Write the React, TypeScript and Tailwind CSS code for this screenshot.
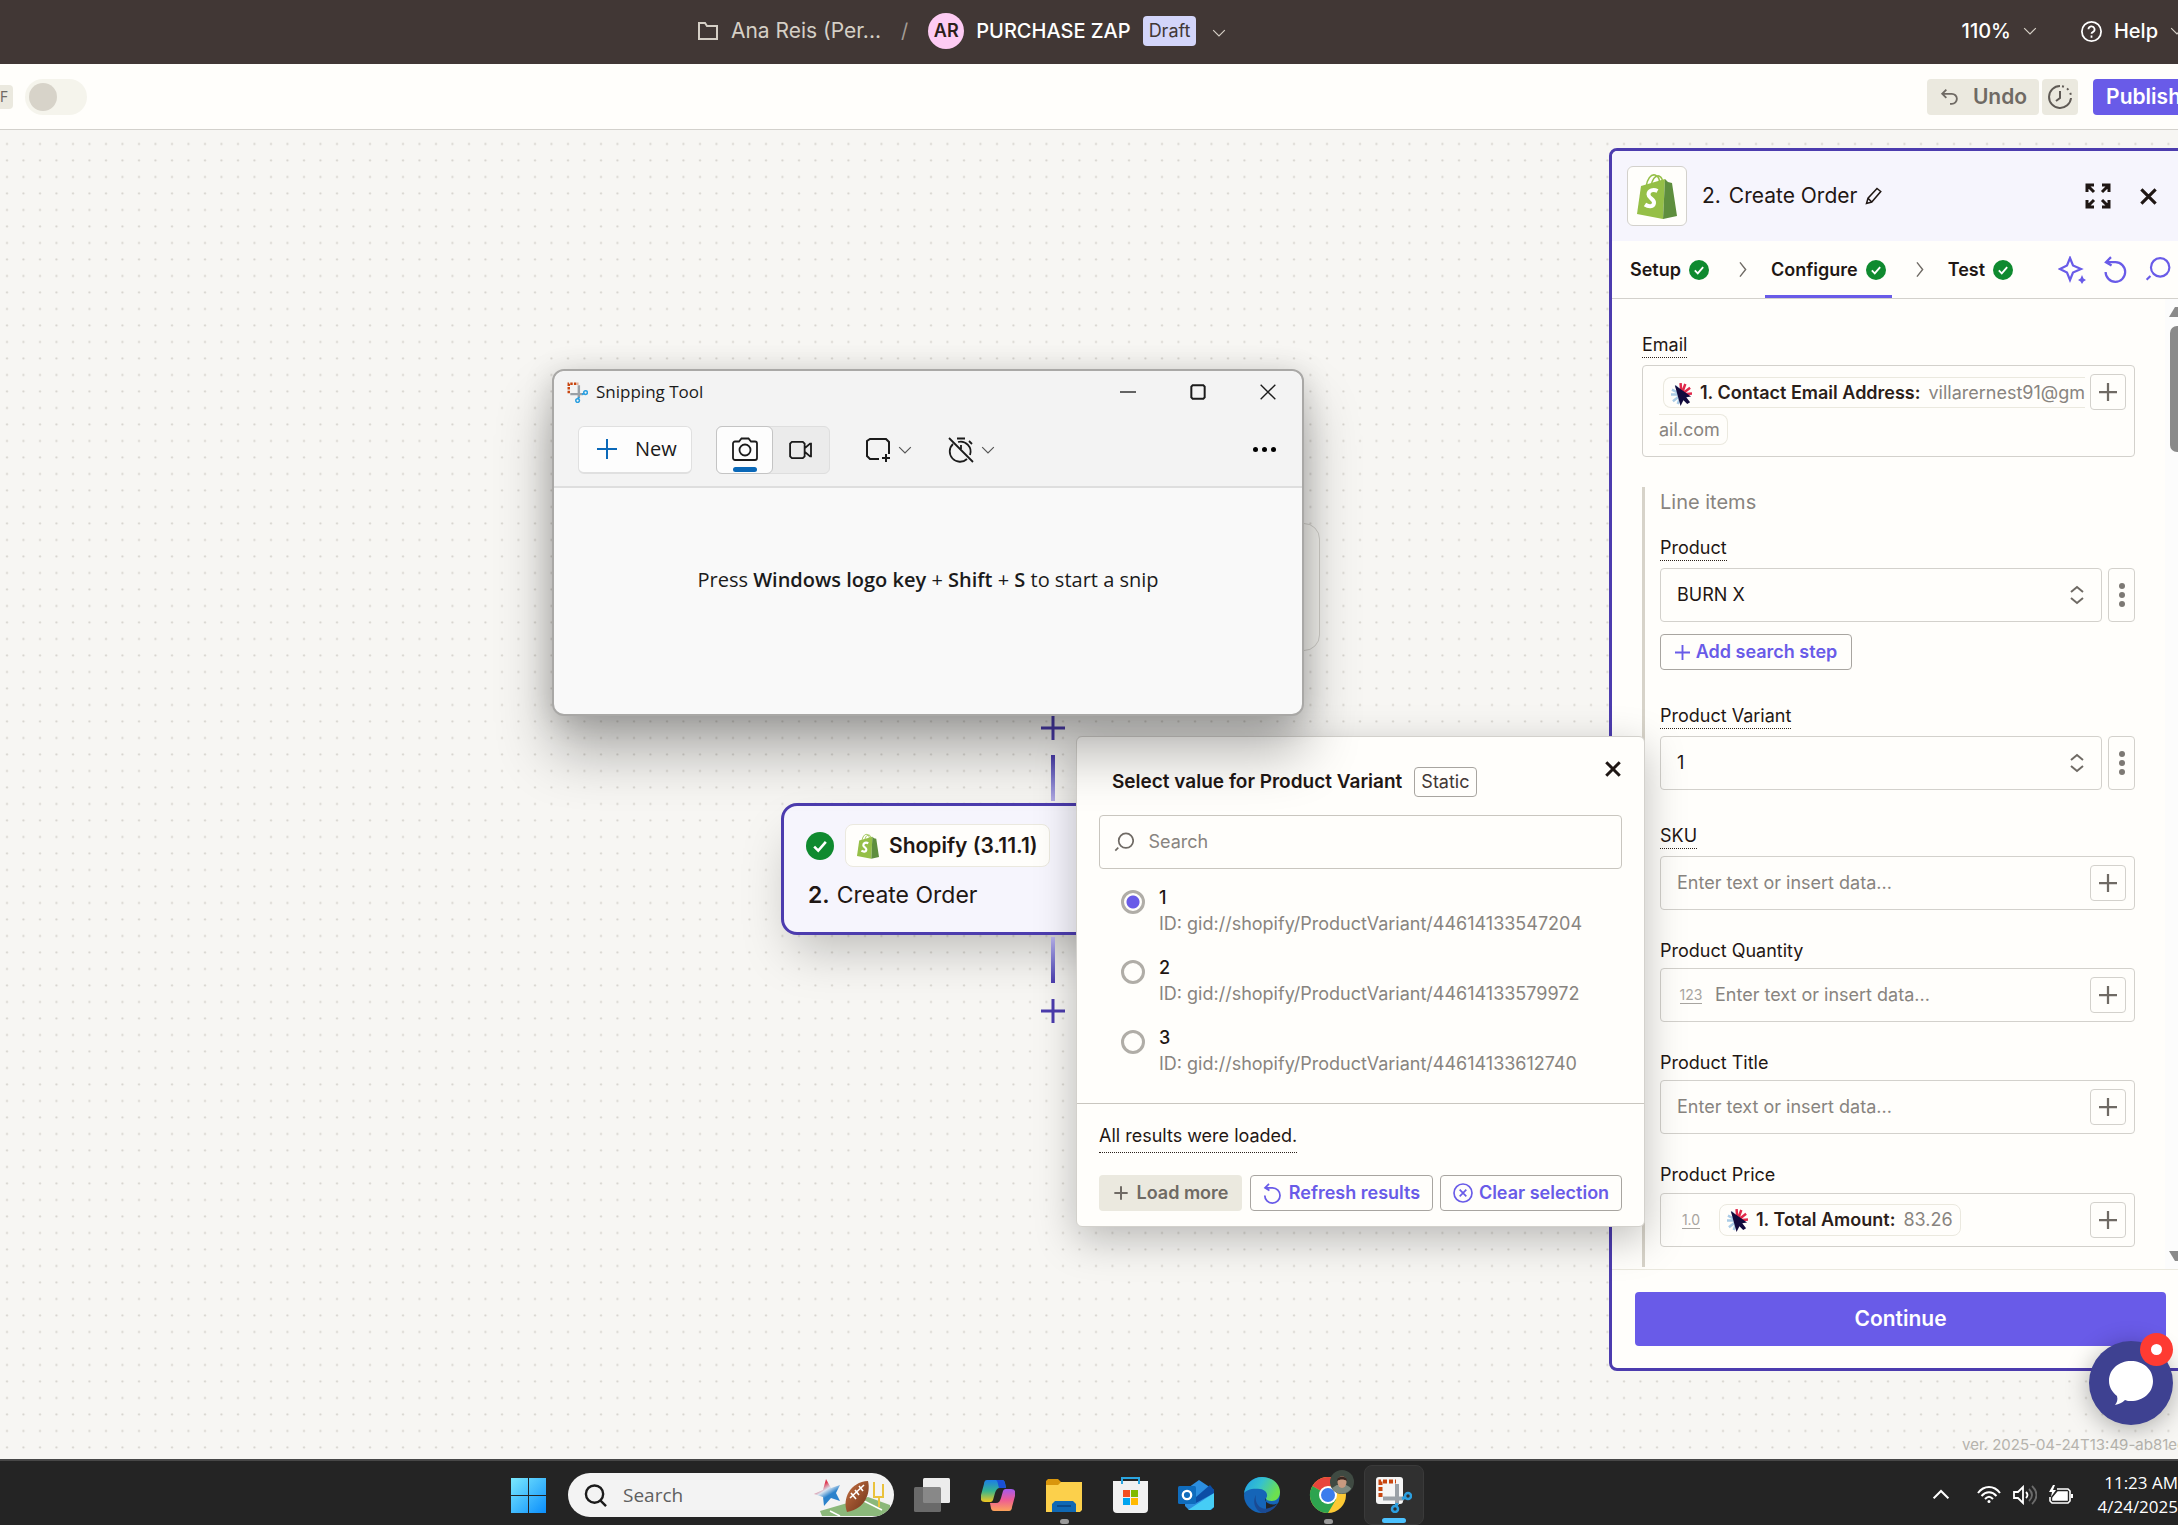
import type { ReactNode } from "react";

const variants = [
  { value: "1", id: "gid://shopify/ProductVariant/44614133547204" },
  { value: "2", id: "gid://shopify/ProductVariant/44614133579972" },
  { value: "3", id: "gid://shopify/ProductVariant/44614133612740" },
];

type IconProps = { className?: string };

function Stroke({
  className,
  d,
  width = 2,
  box = "0 0 24 24",
}: IconProps & { d: string; width?: number; box?: string }) {
  return (
    <svg className={className} viewBox={box} fill="none" stroke="currentColor" strokeWidth={width} aria-hidden="true">
      <path d={d} />
    </svg>
  );
}

const paths = {
  chevronDown: "M2 7l10 10L22 7",
  chevronRight: "M7 2l8 10-8 10",
  plus: "M12 2v20M2 12h20",
  close: "M3 3l18 18M21 3L3 21",
  undo: "M8 4L3.500 8.500 8 13M3.500 8.500H14a5.500 5.500 0 0 1 0 11h-2",
};

function ResetIcon({ className }: IconProps) {
  return (
    <svg className={className} viewBox="0 0 24 24" fill="none" stroke="currentColor" strokeWidth="2" aria-hidden="true">
      <path d="M8 1L3.500 5.500 8.500 8.500M4 5.500h8a8.700 8.700 0 1 1-8.800 8.700" />
    </svg>
  );
}

function SearchIcon({ className }: IconProps) {
  return (
    <svg className={className} viewBox="0 0 24 24" fill="none" stroke="currentColor" strokeWidth="2" aria-hidden="true">
      <circle cx="14" cy="10.500" r="8.500" />
      <path d="M5 18.500L1.500 22" />
    </svg>
  );
}

function CheckBadge({ className }: IconProps) {
  return (
    <svg className={className} viewBox="0 0 24 24" aria-hidden="true">
      <circle cx="12" cy="12" r="12" fill="#0f8a2f" />
      <path d="M7 12.500l3.500 3.500 6.500-7.500" fill="none" stroke="#fff" strokeWidth="2.200" />
    </svg>
  );
}

function ShopifyLogo({ className }: IconProps) {
  return (
    <svg className={className} viewBox="0 0 40 46" aria-hidden="true">
      <path d="M9 14C10 6 14 1 18 2c4 1 5 6 5 11M14 13c1-6 4-11 8-10 3 1 4 5 4 9" fill="none" stroke="#95bf47" strokeWidth="1.600" />
      <path d="M4 13L28 6l-2 40L0 41z" fill="#95bf47" />
      <path d="M28 6l3 3 4 1 5 33-14 3z" fill="#5e8e3e" />
      <path d="M20.500 18c-4-2-9-1-9 3.500 0 4 6 4.500 5.500 8.500-.5 4-5.500 4-9 1.500" fill="none" stroke="#fff" strokeWidth="4" />
    </svg>
  );
}

function CursorLogo({ className }: IconProps) {
  return (
    <svg className={className} viewBox="0 0 22 24" aria-hidden="true">
      <g stroke="#a9cbe6" strokeWidth="2.600">
        <path d="M11 12L0 12M11 12L1 7M11 12L2 19M11 12L7 22M11 12L5 3" />
      </g>
      <g stroke="#e0284a" strokeWidth="2.600">
        <path d="M11 12L10 0M11 12L15 1M11 12L20 5M11 12L22 11" />
      </g>
      <path d="M4 2l17 12-5 1 4 5-3 2-4-4-3 6z" fill="#120b3d" />
    </svg>
  );
}

function SnipGlyph({ className, tile }: IconProps & { tile?: boolean }) {
  return (
    <svg className={className} viewBox="0 0 36 36" aria-hidden="true">
      {tile && <rect width="27" height="27" rx="3" fill="#f5f5f5" />}
      <path d="M4.500 20V4.500H20" fill="none" stroke="#c8450f" strokeWidth="4" strokeDasharray="4 2" />
      <path d="M7 21.500h21M21 7v21" stroke="#9aa0a6" strokeWidth="4" />
      <circle cx="32" cy="19" r="3" fill="none" stroke="#2b9fe0" strokeWidth="2.500" />
      <circle cx="19" cy="32" r="3" fill="none" stroke="#2b9fe0" strokeWidth="2.500" />
      <path d="M26 21.500l4-1M21 26l-1 4" stroke="#2b9fe0" strokeWidth="3" />
    </svg>
  );
}

function TopBar() {
  return (
    <header className="flex h-16 shrink-0 items-center overflow-hidden bg-[#413735] pb-[2px] text-xl text-white">
      <nav className="ml-[32%] flex items-center">
        <a href="#folder" className="flex items-center gap-3 text-[21px] text-[#d5cfc6]">
          <Stroke className="h-5 w-[22px]" box="0 0 22 20" d="M2 18V2h6l2 3h10v13H1" />
          Ana Reis (Per...
        </a>
        <span className="mx-5 text-[#a39c96]">/</span>
        <span className="flex size-9 items-center justify-center rounded-full bg-[#fdcbf3] text-lg font-semibold text-[#2b2019]">
          AR
        </span>
        <h1 className="ml-3 font-medium">PURCHASE ZAP</h1>
        <span className="ml-3 rounded-sm bg-[#d3d5fa] px-[6px] text-lg leading-[30px] text-[#413735]">Draft</span>
        <button aria-label="Zap menu" className="ml-4">
          <Stroke className="mt-1 size-[14px] text-[#d5cfc6]" d={paths.chevronDown} />
        </button>
      </nav>
      <div className="-mr-[6px] ml-auto flex items-center font-medium">
        <button className="flex items-center gap-3">
          110%
          <Stroke className="size-[14px] text-[#d5cfc6]" d={paths.chevronDown} />
        </button>
        <button className="ml-11 flex items-center gap-3">
          <svg className="size-[21px]" viewBox="0 0 24 24" fill="none" stroke="currentColor" strokeWidth="2" aria-hidden="true">
            <circle cx="12" cy="12" r="11" />
            <path d="M8.500 9.500a3.500 3.500 0 1 1 5 3.200c-1 .5-1.500 1-1.500 2M12 16.500V19" />
          </svg>
          Help
          <Stroke className="size-[14px] text-[#d5cfc6]" d={paths.chevronDown} />
        </button>
      </div>
    </header>
  );
}

function ActionBar() {
  return (
    <div className="flex h-[66px] shrink-0 items-center overflow-hidden border-b border-[#d3d1cc] bg-[#fffefb]">
      <label className="-ml-6 flex items-center gap-3">
        <span className="rounded-sm bg-[#ebe9df] px-[5px] text-sm leading-6 text-[#6f6a64]">OFF</span>
        <input
          type="checkbox"
          className="h-9 w-[62px] appearance-none rounded-full bg-[#f5f4ec] p-1 before:block before:size-7 before:rounded-full before:bg-[#d7d3c9]"
        />
      </label>
      <div className="-mr-4 ml-auto flex gap-[3px] text-[21px] font-semibold">
        <button className="flex h-9 items-center gap-3 rounded-sm bg-[#ebe9df] px-3 text-[#6f6a64]">
          <Stroke className="size-[22px]" d={paths.undo} />
          Undo
        </button>
        <button aria-label="History" className="flex size-9 items-center justify-center rounded-sm bg-[#ebe9df] text-[#5f5a55]">
          <svg className="size-[26px]" viewBox="0 0 26 26" fill="none" stroke="currentColor" strokeWidth="2" aria-hidden="true">
            <path d="M13 2A11 11 0 1 0 24 14" />
            <path d="M15 2.200A11 11 0 0 1 24 12" strokeDasharray="2 3.500" />
            <path d="M13 7v7l-4 3" />
          </svg>
        </button>
        <button className="ml-3 h-9 rounded-sm bg-[#695be8] px-[13px] text-white">Publish</button>
      </div>
    </div>
  );
}

function CanvasPlus() {
  return (
    <button aria-label="Add step" className="text-[#4c3cae]">
      <Stroke className="size-6" width={3} d="M12 0v24M0 12h24" />
    </button>
  );
}

function FlowNodes() {
  return (
    <>
      <div className="absolute left-[781px] top-[393px] h-32 w-[539px] rounded-2xl border border-[#d3d1cc] bg-[#f7f6f2]" />
      <div className="absolute left-[781px] top-[586px] flex w-[543px] flex-col items-center">
        <CanvasPlus />
        <div className="mt-[15px] h-[46px] w-1 bg-linear-to-b from-[#4c3cae] to-[#b7b0ea]" />
        <div className="mt-[2px] mb-[2px] h-[132px] w-full rounded-2xl border-3 border-[#4c3cae] bg-[#f6f5fd] px-[22px] pt-[18px] shadow-2xl">
          <div className="flex items-center gap-[11px]">
            <CheckBadge className="size-7" />
            <div className="flex h-[43px] items-center gap-[10px] rounded-lg border border-[#ebe9df] bg-[#fffefb] px-[11px] text-[21px] font-semibold">
              <ShopifyLogo className="h-[26px] w-[22px]" />
              Shopify (3.11.1)
            </div>
          </div>
          <div className="mt-3 flex gap-[7px] pl-[2px] text-[23px] leading-8">
            <b className="font-semibold">2.</b> Create Order
          </div>
        </div>
        <div className="h-[46px] w-1 bg-linear-to-b from-[#b7b0ea] to-[#4c3cae]" />
        <div className="mt-4">
          <CanvasPlus />
        </div>
      </div>
    </>
  );
}

function OutlineButton({ children, className = "" }: { children: ReactNode; className?: string }) {
  return (
    <button
      className={`flex h-9 items-center justify-center gap-[6px] rounded-sm border border-[#a8a5a0] bg-[#fffefb] text-lg font-semibold text-[#695be8] ${className}`}
    >
      {children}
    </button>
  );
}

function VariantPicker() {
  return (
    <section className="absolute left-[1076px] top-[606px] z-10 w-[569px] rounded-md border border-[#d3d1cc] bg-[#fffefb] pt-[30px] pb-[15px] shadow-[0_12px_40px_rgba(0,0,0,0.25)]">
      <button aria-label="Close" className="absolute right-[22px] top-[23px]">
        <Stroke className="size-[18px]" width={4} d={paths.close} />
      </button>
      <div className="flex items-center gap-3 pl-[35px]">
        <h2 className="text-[19px] font-semibold">Select value for Product Variant</h2>
        <span className="rounded-sm border border-[#a8a5a0] px-[6px] text-lg leading-7 text-[#413735]">Static</span>
      </div>
      <div className="px-[22px]">
        <label className="mt-[18px] flex h-[54px] items-center gap-[14px] rounded-sm border border-[#c9c6bf] px-[14px]">
          <SearchIcon className="size-[22px] text-[#6f6a64]" />
          <input aria-label="Search" placeholder="Search" className="w-full text-lg outline-none placeholder:text-[#88847f]" />
        </label>
        <div className="mt-4 pb-2">
          {variants.map((v) => (
            <label key={v.id} className="mb-4 flex h-[54px] gap-[14px] pl-[22px]">
              <input
                type="radio"
                name="variant"
                defaultChecked={v.value === "1"}
                className="mt-[5px] size-6 shrink-0 appearance-none rounded-full border-3 border-[#b0ada7] checked:bg-[radial-gradient(circle,#695be8_6px,transparent_7px)]"
              />
              <span className="text-lg leading-[26px]">
                <span className="block font-medium">{v.value}</span>
                <span className="block text-[#88847f]">ID: {v.id}</span>
              </span>
            </label>
          ))}
        </div>
      </div>
      <div className="border-t border-[#c9c6bf] px-[22px] pt-[18px]">
        <p className="w-fit border-b border-dotted border-[#2b2019] pb-[2px] text-lg leading-7">All results were loaded.</p>
        <div className="mt-[22px] flex justify-between">
          <button className="flex h-9 w-[143px] items-center justify-center gap-2 rounded-sm bg-[#ebe9df] text-lg font-semibold text-[#6f6a64]">
            <Stroke className="size-4" width={3} d={paths.plus} />
            Load more
          </button>
          <OutlineButton className="w-[183px]">
            <ResetIcon className="size-[21px]" />
            Refresh results
          </OutlineButton>
          <OutlineButton className="w-[182px]">
            <svg className="size-5" viewBox="0 0 24 24" fill="none" stroke="currentColor" strokeWidth="2" aria-hidden="true">
              <circle cx="12" cy="12" r="10.800" />
              <path d="M8 8l8 8M16 8l-8 8" />
            </svg>
            Clear selection
          </OutlineButton>
        </div>
      </div>
    </section>
  );
}

function SnippingTool() {
  return (
    <section className="absolute left-[552px] top-[239px] z-20 h-[347px] w-[752px] rounded-xl border-2 border-[#a9a8a6] bg-[#f9f9f9] font-['Open_Sans',sans-serif] text-[#1b1b1b] shadow-[0_36px_56px_rgba(0,0,0,0.3),0_4px_30px_rgba(0,0,0,0.16)]">
      <div className="h-[117px] rounded-t-xl border-b-2 border-[#dedede] bg-[#f3f3f3]">
        <div className="flex h-[42px] items-center pl-3 pr-[26px]">
          <SnipGlyph className="size-[22px]" />
          <h2 className="ml-2 text-[17px]">Snipping Tool</h2>
          <div className="ml-auto flex items-center gap-[54px]">
            <button aria-label="Minimize">
              <Stroke className="size-4" d="M0 12h24" />
            </button>
            <button aria-label="Maximize">
              <Stroke className="size-4" width={3} d="M4 2h16l2 2v16l-2 2H4l-2-2V4z" />
            </button>
            <button aria-label="Close">
              <Stroke className="size-4" d="M1 1l22 22M23 1L1 23" />
            </button>
          </div>
        </div>
        <div className="flex h-[73px] items-center px-6">
          <button className="flex h-12 w-[114px] items-center gap-4 rounded-md border border-b-2 border-[#e0e0e0] bg-[#fdfdfd] pl-4 text-xl">
            <Stroke className="size-6 text-[#0a68b8]" d={paths.plus} />
            New
          </button>
          <div className="ml-6 flex h-12 rounded-md border border-[#dedede] bg-[#ebebeb]">
            <button
              aria-label="Snip"
              className="-my-px -ml-px flex w-[57px] flex-col items-center gap-[6px] rounded-md border border-[#c4c4c4] bg-[#fdfdfd] pt-[10px]"
            >
              <svg className="h-6 w-[26px] shrink-0" viewBox="0 0 26 24" fill="none" stroke="currentColor" strokeWidth="1.800" aria-hidden="true">
                <path d="M3 4.500h4L9.500 1.500h7L19 4.500h4a2 2 0 0 1 2 2V21a2 2 0 0 1-2 2H3a2 2 0 0 1-2-2V6.500a2 2 0 0 1 2-2z" />
                <circle cx="13" cy="13" r="5.500" />
              </svg>
              <span className="h-[5px] w-6 rounded-full bg-[#0a68b8]" />
            </button>
            <button aria-label="Record" className="flex w-14 items-center justify-center">
              <Stroke className="h-5 w-6" box="0 0 26 22" d="M3 2h12l2 2v14l-2 2H3l-2-2V4zM17 9l6-5h1v14h-1l-6-5" />
            </button>
          </div>
          <button aria-label="Snip mode" className="ml-[35px] flex items-center gap-[7px]">
            <Stroke className="size-[26px]" box="0 0 26 26" d="M14 22H5l-3-3V4l3-2h16l3 3v12M21 17v8M17 21h8" />
            <Stroke className="size-[14px] text-[#555]" d={paths.chevronDown} />
          </button>
          <button aria-label="Delay" className="ml-9 flex items-center gap-[7px]">
            <svg className="size-[26px]" viewBox="0 0 26 26" fill="none" stroke="currentColor" strokeWidth="1.800" aria-hidden="true">
              <path d="M1 1l24 24M9 1.500h8M21 4l3 3M13 8v4M10 5a10 10 0 0 1 12 13M5 7a10 10 0 0 0 14 15" />
            </svg>
            <Stroke className="size-[14px] text-[#555]" d={paths.chevronDown} />
          </button>
          <button aria-label="More" className="ml-auto mr-[2px] flex gap-1">
            <span className="size-[5px] rounded-full bg-black" />
            <span className="size-[5px] rounded-full bg-black" />
            <span className="size-[5px] rounded-full bg-black" />
          </button>
        </div>
      </div>
      <p className="pt-[76px] text-center text-xl leading-8">
        Press <b className="font-semibold">Windows logo key</b> + <b className="font-semibold">Shift</b> +{" "}
        <b className="font-semibold">S</b> to start a snip
      </p>
    </section>
  );
}

function InsertButton() {
  return (
    <button
      aria-label="Insert data"
      className="flex size-9 shrink-0 items-center justify-center rounded-sm border border-[#d3d1cc] text-[#6f6a64]"
    >
      <Stroke className="size-[18px]" width={3} d="M12 0v24M0 12h24" />
    </button>
  );
}

function SelectField({ id, label, value }: { id: string; label: string; value: string }) {
  return (
    <div>
      <label htmlFor={id} className="block w-fit border-b border-dotted border-[#2b2019] leading-6">
        {label}
      </label>
      <div className="mt-[7px] flex gap-[6px]">
        <div className="relative flex-1">
          <select id={id} className="h-[54px] w-full appearance-none rounded-sm border border-[#d3d1cc] px-4">
            <option>{value}</option>
          </select>
          <Stroke
            className="pointer-events-none absolute right-[18px] top-[17px] h-5 w-[14px] text-[#6f6a64]"
            box="0 0 14 20"
            d="M1 7l6-5 6 5M1 13l6 5 6-5"
          />
        </div>
        <button aria-label={`${label} options`} className="flex w-[27px] flex-col items-center justify-center gap-[3px] rounded-sm border border-[#d3d1cc]">
          <span className="size-[6px] rounded-full bg-[#7d7974]" />
          <span className="size-[6px] rounded-full bg-[#7d7974]" />
          <span className="size-[6px] rounded-full bg-[#7d7974]" />
        </button>
      </div>
    </div>
  );
}

function TextField({ id, label, hint, prefix }: { id: string; label: string; hint?: boolean; prefix?: string }) {
  return (
    <div>
      <label
        htmlFor={id}
        className={hint ? "mb-[7px] block w-fit border-b border-dotted border-[#2b2019] leading-6" : "mb-[5px] block leading-6"}
      >
        {label}
      </label>
      <div className="flex h-[54px] items-center rounded-sm border border-[#d3d1cc] pl-4 pr-2">
        {prefix && <TypeHint text={prefix} />}
        <input id={id} placeholder="Enter text or insert data..." className="min-w-0 flex-1 outline-none placeholder:text-[#88847f]" />
        <InsertButton />
      </div>
    </div>
  );
}

function TypeHint({ text }: { text: string }) {
  return (
    <span className="mr-[10px] w-7 text-center text-sm leading-4 text-[#a8a5a0]">
      <span className="border-b border-[#a8a5a0]">{text}</span>
    </span>
  );
}

function StepTab({ label, active }: { label: string; active?: boolean }) {
  return (
    <button
      className={`flex h-full items-center gap-2 border-b-3 px-[6px] pt-[3px] text-lg font-semibold ${
        active ? "border-[#695be8]" : "border-transparent"
      }`}
    >
      {label}
      <CheckBadge className="size-5" />
    </button>
  );
}

function StepPanel() {
  return (
    <aside className="-mr-[14px] mb-[88px] mt-[18px] ml-auto flex w-[583px] flex-col rounded-lg border-3 border-[#4c3cae] bg-[#fffefb] text-lg">
      <header className="flex h-[90px] shrink-0 items-center rounded-t-md bg-[#f6f5fd] pl-[15px] pr-[31px]">
        <span className="flex size-[60px] items-center justify-center rounded-md border border-[#d3d1cc] bg-[#fffefb]">
          <ShopifyLogo className="h-[46px] w-10" />
        </span>
        <h2 className="ml-[15px] flex items-center gap-2 text-[21px]">
          <span>2.</span>
          <span>Create Order</span>
          <Stroke className="size-[18px]" d="M2 22l2-7L16 2l5 4L9 20zM4 15l5 5" />
        </h2>
        <button aria-label="Expand" className="ml-auto">
          <Stroke
            className="size-[26px]"
            width={3}
            box="0 0 26 26"
            d="M2 9V2h7M2 2l7 7M17 2h7v7M24 2l-7 7M2 17v7h7M2 24l7-7M24 17v7h-7M24 24l-7-7"
          />
        </button>
        <button aria-label="Close panel" className="ml-7">
          <Stroke className="size-[19px]" width={4} d={paths.close} />
        </button>
      </header>
      <div className="flex h-[58px] shrink-0 items-center border-b border-[#d3d1cc] pl-[12px] pr-[18px]">
        <StepTab label="Setup" />
        <Stroke className="ml-5 mr-[13px] size-[17px] text-[#6f6a64]" d={paths.chevronRight} />
        <StepTab label="Configure" active />
        <Stroke className="ml-5 mr-[13px] size-[17px] text-[#6f6a64]" d={paths.chevronRight} />
        <StepTab label="Test" />
        <div className="ml-auto flex gap-4 text-[#695be8]">
          <svg className="size-7" viewBox="0 0 28 28" fill="none" stroke="currentColor" strokeWidth="2.200" aria-hidden="true">
            <path d="M12 2l3 7.500 8 3.500-8 3.500-3 7.500-3-7.500L2 13l7-3.500z" />
            <path d="M24 19l1.500 3.500L28 24l-2.500 1.500L24 28l-1.500-2.500L20 24l2.500-1.500z" fill="currentColor" stroke="none" />
          </svg>
          <ResetIcon className="size-[27px]" />
          <SearchIcon className="size-[26px]" />
        </div>
      </div>
      <div className="flex min-h-0 flex-1">
        <div className="min-w-0 flex-1 overflow-hidden pl-[30px] pr-[30px] pt-[34px]">
          <div id="email-label" className="w-fit border-b border-dotted border-[#2b2019] leading-6">
            Email
          </div>
          <div className="mt-[7px] flex h-[92px] rounded-sm border border-[#d3d1cc] pl-4 pr-2 pt-2">
            <div role="textbox" aria-labelledby="email-label" className="flex-1 leading-[37px]">
              <span className="ml-1 rounded-lg border border-[#ebe9df] px-[7px] py-1 text-[#88847f]">
                <CursorLogo className="mr-2 inline h-[23px] w-[21px]" />
                <b className="mr-2 font-semibold text-[#2b2019]">1. Contact Email Address:</b>
                villarernest91@gm
                <wbr />
                ail.com
              </span>
            </div>
            <InsertButton />
          </div>
          <div className="mt-[30px] flex flex-col border-l-3 border-[#d7d3c9] pb-5 pl-[15px]">
            <h3 className="mb-[19px] text-xl leading-[30px] text-[#88847f]">Line items</h3>
            <SelectField id="product" label="Product" value="BURN X" />
            <OutlineButton className="mb-[34px] mt-3 w-[192px]">
              <Stroke className="size-[15px]" width={3} d="M12 0v24M0 12h24" />
              Add search step
            </OutlineButton>
            <SelectField id="variant" label="Product Variant" value="1" />
            <div className="mt-[34px] flex flex-col gap-[29px]">
              <TextField id="sku" label="SKU" hint />
              <TextField id="quantity" label="Product Quantity" prefix="123" />
              <TextField id="title" label="Product Title" />
              <div>
                <div id="price-label" className="mb-[6px] leading-6">
                  Product Price
                </div>
                <div className="flex h-[54px] items-center rounded-sm border border-[#d3d1cc] pl-4 pr-2">
                  <TypeHint text="1.0" />
                  <div role="textbox" aria-labelledby="price-label" className="flex flex-1">
                    <span className="ml-1 flex h-8 items-center rounded-lg border border-[#ebe9df] px-[7px] text-[#88847f]">
                      <CursorLogo className="mr-2 h-[23px] w-[21px]" />
                      <b className="mr-2 font-semibold text-[#2b2019]">1. Total Amount:</b>
                      83.26
                    </span>
                  </div>
                  <InsertButton />
                </div>
              </div>
            </div>
          </div>
        </div>
        <div className="flex w-6 shrink-0 flex-col items-center bg-[#fcfcfc] py-2">
          <svg className="h-[10px] w-4" viewBox="0 0 16 10" aria-hidden="true">
            <path d="M6 0h4l6 10H0z" fill="#8a8a8a" />
          </svg>
          <div className="mt-[9px] h-[126px] w-[14px] rounded-full bg-[#8a8a8a]" />
          <svg className="mt-auto h-[10px] w-4" viewBox="0 0 16 10" aria-hidden="true">
            <path d="M6 10h4l6-10H0z" fill="#8a8a8a" />
          </svg>
        </div>
      </div>
      <footer className="border-t border-[#ebe9df] px-[23px] py-[22px]">
        <button className="h-[54px] w-full rounded-sm bg-[#695be8] text-[21px] font-semibold text-white">Continue</button>
      </footer>
    </aside>
  );
}

function ChatBubble() {
  return (
    <button
      aria-label="Open chat"
      className="absolute bottom-[34px] right-[5px] z-30 flex size-[84px] items-center justify-center rounded-full bg-[#3e4191] shadow-[0_4px_24px_rgba(0,0,0,0.3)]"
    >
      <svg className="size-[44px]" viewBox="0 0 44 44" fill="#fff" aria-hidden="true">
        <path d="M22 0c12 0 22 8 22 20s-10 20-22 20c-2 0-4 0-6-1-3 3-6 4-10 5 2-3 3-5 2-9C3 31 0 26 0 20 0 8 10 0 22 0z" />
      </svg>
      <span className="absolute -top-2 right-0 flex size-[33px] items-center justify-center rounded-full bg-[#fe3b32]">
        <span className="size-[11px] rounded-full bg-white" />
      </span>
    </button>
  );
}

function TaskItem({ label, running, active, children }: { label: string; running?: boolean; active?: boolean; children: ReactNode }) {
  return (
    <button
      aria-label={label}
      className={`relative flex h-[60px] w-[60px] items-center justify-center rounded-lg ${active ? "border border-[#3a3a3a] bg-[#303030]" : ""}`}
    >
      {children}
      {running && <span className="absolute bottom-px h-[5px] w-[9px] rounded-full bg-[#9a9a9a]" />}
      {active && <span className="absolute bottom-px h-[5px] w-6 rounded-full bg-[#4cc2ff]" />}
    </button>
  );
}

function Taskbar() {
  return (
    <footer className="flex h-[66px] shrink-0 items-center overflow-hidden border-t-2 border-[#474747] bg-[#242424] pt-1 font-['Open_Sans',sans-serif]">
      <button aria-label="Start" className="ml-[511px]">
        <svg className="size-[35px]" viewBox="0 0 35 35" aria-hidden="true">
          <defs>
            <linearGradient id="win" gradientUnits="userSpaceOnUse" x1="0" y1="0" x2="35" y2="35">
              <stop offset="0" stopColor="#7be9fd" />
              <stop offset="1" stopColor="#0a8efc" />
            </linearGradient>
          </defs>
          <path d="M0 0h17v17H0zM18 0h17v17H18zM0 18h17v17H0zM18 18h17v17H18z" fill="url(#win)" />
        </svg>
      </button>
      <label className="ml-[22px] flex h-11 w-[326px] items-center overflow-hidden rounded-full bg-[#f3f3f3] pl-4 pr-1">
        <svg className="size-[23px] shrink-0 text-[#1b1b1b]" viewBox="0 0 24 24" fill="none" stroke="currentColor" strokeWidth="2.500" aria-hidden="true">
          <circle cx="11" cy="10.500" r="9" />
          <path d="M17 17l6 6" />
        </svg>
        <input aria-label="Windows search" placeholder="Search" className="ml-4 min-w-0 flex-1 text-[19px] outline-none placeholder:text-[#5f5f5f]" />
        <svg className="h-11 w-[76px] shrink-0" viewBox="0 0 76 44" aria-hidden="true">
          <defs>
            <linearGradient id="star" x1="0" y1="0" x2="0.600" y2="1">
              <stop offset="0.300" stopColor="#e0374f" />
              <stop offset="0.500" stopColor="#d8e4f0" />
              <stop offset="0.700" stopColor="#2b82cc" />
            </linearGradient>
            <linearGradient id="ball" x1="0" y1="0" x2="1" y2="1">
              <stop offset="0.200" stopColor="#b5653a" />
              <stop offset="1" stopColor="#6e3219" />
            </linearGradient>
          </defs>
          <path d="M6 38l48-14 22 8v6l-10 5H8z" fill="#8bb87a" />
          <path d="M16 38l10 5M50 28l18 9" stroke="#fff" strokeWidth="1.500" />
          <path d="M12 6l5 9 9-3-4 8 4 8-9-3-7 8-1-9-9-3 9-4z" fill="url(#star)" />
          <path d="M54 8c3 12-3 28-21 31C28 26 36 9 54 8z" fill="url(#ball)" />
          <path d="M36 25L50 12M37 20l5 6M41 17l4 5M45 13l4 5" stroke="#fff" strokeWidth="1.600" />
          <path d="M60 9v15h9V11M65 24v10" fill="none" stroke="#eac23c" strokeWidth="2" />
        </svg>
      </label>
      <div className="ml-2 flex gap-[6px]">
        <TaskItem label="Task view">
          <svg className="h-[34px] w-9" viewBox="0 0 36 34" aria-hidden="true">
            <rect x="9" width="27" height="25" rx="1.500" fill="#ececec" />
            <rect y="9" width="27" height="25" rx="1.500" fill="#777" fillOpacity="0.850" />
          </svg>
        </TaskItem>
        <TaskItem label="Copilot">
          <svg className="h-[31px] w-[34px]" viewBox="0 0 34 31" aria-hidden="true">
            <defs>
              <linearGradient id="copA" x1="0" y1="0" x2="0" y2="1">
                <stop offset="0" stopColor="#1c7de8" />
                <stop offset="0.500" stopColor="#36b58e" />
                <stop offset="1" stopColor="#f4c81e" />
              </linearGradient>
              <linearGradient id="copB" x1="0" y1="0" x2="0" y2="1">
                <stop offset="0" stopColor="#a45af0" />
                <stop offset="0.500" stopColor="#ee5c94" />
                <stop offset="1" stopColor="#fba35a" />
              </linearGradient>
            </defs>
            <path d="M6 0h15c3 0 3 3 4 8h-6c-3 0-4 2-5 5l-2 7c-1 2-2 2-4 2H4c-4 0-5-3-4-7L3 4c0-2 1-4 3-4z" fill="url(#copA)" />
            <path d="M15 0h6c3 0 3 3 4 8h-7c-1-3-1-7-3-8z" fill="#1a50d8" />
            <path d="M28 31H13c-3 0-3-3-4-8h6c3 0 4-2 5-5l2-7c1-2 2-2 4-2h4c4 0 5 3 4 7l-3 11c0 2-1 4-3 4z" fill="url(#copB)" />
          </svg>
        </TaskItem>
        <TaskItem label="File Explorer" running>
          <svg className="h-[33px] w-9" viewBox="0 0 36 33" aria-hidden="true">
            <path d="M0 2l2-2h10l4 4-3 8H0z" fill="#d9960c" />
            <path d="M0 6h12l3-3h21v28l-2 2H0z" fill="#fcd04b" />
            <path d="M6 33v-8l3-3h18l3 3v8z" fill="#0f68b4" />
            <path d="M11 27h14" stroke="#0a4a8a" strokeWidth="2" />
          </svg>
        </TaskItem>
        <TaskItem label="Microsoft Store">
          <svg className="h-9 w-[35px]" viewBox="0 0 35 36" aria-hidden="true">
            <path d="M0 4h35v28a4 4 0 0 1-4 4H4a4 4 0 0 1-4-4z" fill="#f1f1f1" />
            <path d="M9 7V1h17v6" fill="none" stroke="#2aa5e0" strokeWidth="2" />
            <path d="M10 13h7v7h-7z" fill="#f25022" />
            <path d="M18 13h7v7h-7z" fill="#7fba00" />
            <path d="M10 21h7v7h-7z" fill="#00a4ef" />
            <path d="M18 21h7v7h-7z" fill="#ffb900" />
          </svg>
        </TaskItem>
        <TaskItem label="Outlook">
          <svg className="h-[31px] w-9" viewBox="0 0 36 31" aria-hidden="true">
            <path d="M7 10L21 0l15 10v17l-3 3H11l-4-4z" fill="#2c8fe0" />
            <path d="M36 13v14l-4 3H10z" fill="#46cdf5" />
            <path d="M18 17L32 5l4 5v3L18 23z" fill="#0c4ea6" />
            <rect y="6" width="18" height="18" rx="1.500" fill="#0f6cbd" />
            <circle cx="9" cy="15" r="4.200" fill="none" stroke="#fff" strokeWidth="2.300" />
          </svg>
        </TaskItem>
        <TaskItem label="Edge">
          <svg className="size-9" viewBox="0 0 36 36" aria-hidden="true">
            <defs>
              <linearGradient id="edgeTop" x1="0" y1="0" x2="1" y2="0.400">
                <stop offset="0" stopColor="#1f9fe6" />
                <stop offset="0.500" stopColor="#35c1cf" />
                <stop offset="1" stopColor="#6ce04f" />
              </linearGradient>
            </defs>
            <circle cx="18" cy="18" r="18" fill="#1565b8" />
            <path d="M0 17C1 7 9 0 18 0c10 0 18 7 18 15 0 6-4 9-8 9-4 0-6-1-6-3 2-1 2-8-6-9C8 11 1 13 0 17z" fill="url(#edgeTop)" />
            <path d="M22 21c-3 4 5 9 13 5l1-8v18H22z" fill="#242424" />
            <path d="M12 18c-2 9 5 16 13 13 4-1 7-3 9-5-3 6-9 10-16 10-7-3-10-11-6-18z" fill="#1a4a93" />
          </svg>
        </TaskItem>
        <TaskItem label="Chrome" running>
          <svg className="size-9 overflow-visible" viewBox="0 0 36 36" aria-hidden="true">
            <circle cx="18" cy="18" r="18" fill="#fcc934" />
            <path d="M18 18L2.400 9A18 18 0 0 1 33.600 9H18z" fill="#e8453c" />
            <path d="M18 18L2.400 9A18 18 0 0 0 18 36l8-13.500z" fill="#2da44f" />
            <circle cx="18" cy="18" r="9" fill="#fff" />
            <circle cx="18" cy="18" r="7" fill="#3b7ded" />
            <circle cx="32" cy="5" r="12" fill="#3f4a42" />
            <path d="M22 11c3-1 3-3 6-3h8c3 1 5 3 5 4a12 12 0 0 1-17 2z" fill="#7d8a80" />
            <ellipse cx="32" cy="5" rx="4.500" ry="6" fill="#c99a80" />
            <path d="M27 4c0-6 10-6 10 0-3-2-7-2-10 0z" fill="#3a2620" />
          </svg>
        </TaskItem>
        <TaskItem label="Snipping Tool" active>
          <SnipGlyph className="size-9" tile />
        </TaskItem>
      </div>
      <div className="ml-auto flex items-center text-white">
        <Stroke className="mr-7 size-4" width={3} d="M1 17L12 6l11 11" />
        <svg className="mr-3 h-[18px] w-6" viewBox="0 0 24 18" fill="none" stroke="currentColor" strokeWidth="2" aria-hidden="true">
          <path d="M1 7C7-1 17-1 23 7M4.500 10C9 5 15 5 19.500 10M8 13c3-3 5-3 8 0" />
          <circle cx="12" cy="15.500" r="1.500" fill="currentColor" stroke="none" />
        </svg>
        <svg className="mr-3 h-5 w-6" viewBox="0 0 24 20" fill="none" stroke="currentColor" strokeWidth="1.800" aria-hidden="true">
          <path d="M1 7h4l5-5v16l-5-5H1zM13 7c2 2 2 4 0 6" />
          <path d="M16 4c4 4 4 8 0 12M19 1c6 6 6 12 0 18" stroke="#6b6b6b" />
        </svg>
        <svg className="mr-6 h-5 w-6" viewBox="0 0 24 20" fill="none" stroke="currentColor" strokeWidth="1.600" aria-hidden="true">
          <path d="M8 4h11l2 2v10l-2 2H3l-2-2v-4" />
          <path d="M9 7h9v8H4v-2z" fill="currentColor" />
          <path d="M4 0L0 7h3l-1 5 5-7H4l2-5zM22 9h2v4h-2z" fill="currentColor" stroke="none" />
        </svg>
        <div className="text-right text-[17px] leading-6">
          <div>11:23 AM</div>
          <div>4/24/2025</div>
        </div>
      </div>
    </footer>
  );
}

export default function App() {
  return (
    <div className="flex min-h-screen flex-col overflow-hidden bg-[#f7f6f3] font-['Inter',sans-serif] text-[#1f1714]">
      <TopBar />
      <ActionBar />
      <main className="relative flex flex-1">
        <svg className="pointer-events-none absolute inset-0 h-full w-full" aria-hidden="true">
          <defs>
            <pattern id="dots" width="16.500" height="16.500" patternUnits="userSpaceOnUse">
              <circle cx="7" cy="14" r="1.100" fill="#d6d3cd" />
            </pattern>
          </defs>
          <rect width="100%" height="100%" fill="url(#dots)" />
        </svg>
        <FlowNodes />
        <div className="relative flex flex-1">
          <StepPanel />
        </div>
        <VariantPicker />
        <SnippingTool />
        <p className="absolute bottom-0 right-0 w-[216px] whitespace-nowrap text-[15px] leading-7 text-[#b5b3ad]">
          ver. 2025-04-24T13:49-ab81ee3f
        </p>
        <ChatBubble />
      </main>
      <Taskbar />
    </div>
  );
}
